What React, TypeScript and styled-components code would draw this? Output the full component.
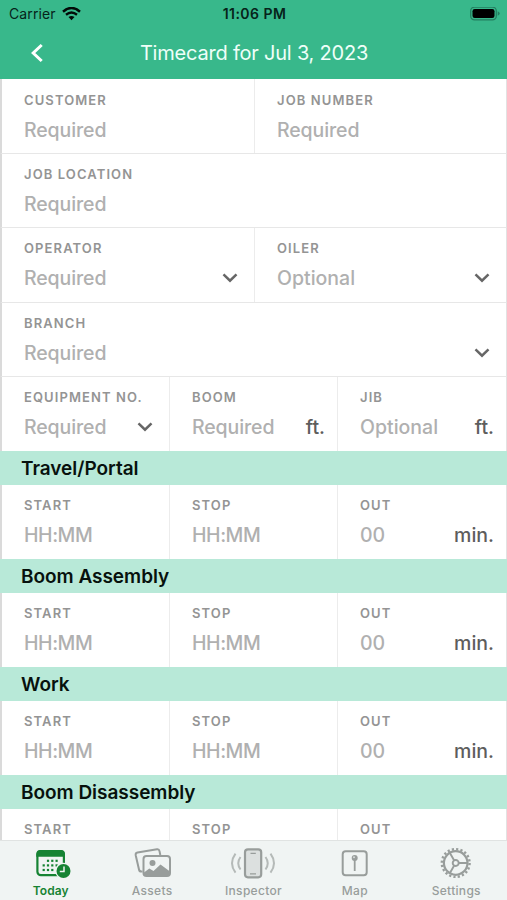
import React from "react";
import styled, { createGlobalStyle } from "styled-components";

const GlobalStyle = createGlobalStyle`
  * { box-sizing: border-box; }
  html, body { margin: 0; padding: 0; background: #fff; }
  body { font-family: Inter, "Liberation Sans", sans-serif; overflow: hidden; }
`;

const Screen = styled.div`
  width: 507px;
  height: 900px;
  display: flex;
  flex-direction: column;
  overflow: hidden;
  background: #fff;
`;

const Header = styled.header`
  flex: none;
  height: 79px;
  background: #38b88b;
`;

const StatusBar = styled.div`
  height: 27px;
  display: grid;
  grid-template-columns: 1fr auto 1fr;
  align-items: center;
  padding: 0 7px 0 9px;
  color: #06231a;
  font-size: 14px;
  line-height: 27px;
`;

const Carrier = styled.div`
  display: flex;
  align-items: center;
  gap: 6px;
  letter-spacing: 0.1px;
`;

const Clock = styled.div`
  font-weight: 600;
  letter-spacing: 0.45px;
`;

const Battery = styled.svg`
  justify-self: end;
`;

const NavBar = styled.div`
  height: 52px;
  display: grid;
  grid-template-columns: 74px 1fr 74px;
  align-items: center;
`;

const BackButton = styled.button`
  border: 0;
  padding: 0;
  background: none;
  height: 52px;
  display: grid;
  place-items: center;
`;

const Title = styled.h1`
  margin: 0;
  padding-left: 1px;
  color: #effff9;
  font-size: 20px;
  font-weight: 400;
  letter-spacing: -0.21px;
  text-align: center;
  white-space: nowrap;
`;

const Form = styled.main`
  flex: 1;
  min-height: 0;
  overflow: hidden;
`;

const Row = styled.div<{ $columns: string; $height: number; $last?: boolean; $inset?: number }>`
  display: grid;
  grid-template-columns: ${(p) => p.$columns};
  height: ${(p) => p.$height}px;
  padding-top: 0;
  border-left: 2px solid #dadada;
  border-right: 1px solid #e2e2e2;
  border-bottom: ${(p) => (p.$last ? 0 : 1)}px solid #e7e7e7;
  & > div {
    padding-top: ${(p) => p.$inset ?? 13}px;
  }
`;

const Cell = styled.div`
  min-width: 0;
  padding: 0 12px 0 22px;
  & + & {
    border-left: 1px solid #ececec;
  }
`;

const Label = styled.div`
  color: #949494;
  font-size: 13px;
  font-weight: 600;
  letter-spacing: 1.1px;
  line-height: 14px;
  white-space: nowrap;
`;

const Field = styled.div`
  display: flex;
  justify-content: space-between;
  align-items: center;
  height: 24px;
  margin-top: 11px;
`;

const Value = styled.span<{ $tracking: number }>`
  color: #b0b0b0;
  font-size: 19.5px;
  font-weight: 500;
  letter-spacing: ${(p) => p.$tracking}px;
`;

const Unit = styled.span`
  color: #5d5d5d;
  font-size: 19.5px;
  font-weight: 500;
`;

const Chevron = styled.svg`
  margin-right: 4px;
`;

const SectionTitle = styled.h2`
  height: 34px;
  margin: 0;
  padding: 1px 0 0 21px;
  background: #b8e9d8;
  color: #07110d;
  font-size: 19px;
  font-weight: 600;
  line-height: 34px;
  letter-spacing: -0.03px;
`;

const TabBar = styled.nav`
  flex: none;
  height: 60px;
  display: grid;
  grid-template-columns: repeat(5, 1fr);
  border-top: 1px solid #e0e3e2;
  background: #f0f4f3;
`;

const Tab = styled.a<{ $active?: boolean }>`
  display: flex;
  flex-direction: column;
  align-items: center;
  color: ${(p) => (p.$active ? "#168333" : "#989d9b")};
  font-size: 12px;
  font-weight: ${(p) => (p.$active ? 600 : 500)};
  line-height: 14px;
  letter-spacing: ${(p) => (p.$active ? 0.1 : 0.3)}px;
`;

const TabIcon = styled.svg`
  width: 50px;
  height: 43px;
`;

type FieldSpec = {
  label: string;
  value: string;
  unit?: string;
  menu?: boolean;
};

const tracking: Record<string, number> = {
  Required: -0.1,
  Optional: 0,
  "HH:MM": -0.45,
  "00": 0,
};

function FieldCell({ label, value, unit, menu }: FieldSpec) {
  return (
    <Cell>
      <Label>{label}</Label>
      <Field>
        <Value $tracking={tracking[value]}>{value}</Value>
        {unit && <Unit>{unit}</Unit>}
        {menu && (
          <Chevron width="16" height="10" viewBox="0 0 16 10" fill="none">
            <path d="M1.5 1.3 8 7.700l6.500-6.400" stroke="#666" strokeWidth="2.500" />
          </Chevron>
        )}
      </Field>
    </Cell>
  );
}

const full = "1fr";
const halves = "252px 1fr";
const thirds = "167px 168px 1fr";

const jobRows: { columns: string; height: number; inset?: number; last?: boolean; fields: FieldSpec[] }[] = [
  {
    columns: halves,
    height: 75,
    inset: 14,
    fields: [
      { label: "CUSTOMER", value: "Required" },
      { label: "JOB NUMBER", value: "Required" },
    ],
  },
  { columns: full, height: 74, fields: [{ label: "JOB LOCATION", value: "Required" }] },
  {
    columns: halves,
    height: 75,
    fields: [
      { label: "OPERATOR", value: "Required", menu: true },
      { label: "OILER", value: "Optional", menu: true },
    ],
  },
  { columns: full, height: 74, fields: [{ label: "BRANCH", value: "Required", menu: true }] },
  {
    columns: thirds,
    height: 74,
    last: true,
    fields: [
      { label: "EQUIPMENT NO.", value: "Required", menu: true },
      { label: "BOOM", value: "Required", unit: "ft." },
      { label: "JIB", value: "Optional", unit: "ft." },
    ],
  },
];

const timeSections = ["Travel/Portal", "Boom Assembly", "Work", "Boom Disassembly"];

const timeFields: FieldSpec[] = [
  { label: "START", value: "HH:MM" },
  { label: "STOP", value: "HH:MM" },
  { label: "OUT", value: "00", unit: "min." },
];

const dots = [
  [22, 19.8], [26.3, 19.8], [30.6, 19.8],
  [17.7, 24.4], [22, 24.4], [26.3, 24.4], [30.6, 24.4],
  [17.7, 29], [22, 29], [26.3, 29],
];

function TodayIcon() {
  return (
    <TabIcon viewBox="0 0 50 43">
      <rect x="11.4" y="10.200" width="26.500" height="24" rx="3.500" fill="none" stroke="currentColor" strokeWidth="2.200" />
      <path d="M10.300 15.800v-2.800a4 4 0 0 1 4-4h20.700a4 4 0 0 1 4 4v2.800z" fill="currentColor" />
      {dots.map(([x, y]) => (
        <rect key={`${x}-${y}`} x={x - 1.1} y={y - 1.1} width="2.2" height="2.2" fill="currentColor" />
      ))}
      <circle cx="37.500" cy="30" r="8.300" fill="#f0f4f3" />
      <circle cx="37.500" cy="30" r="7" fill="currentColor" />
      <path d="M38 25.500v5h-4.200" fill="none" stroke="#f0f4f3" strokeWidth="1.500" />
    </TabIcon>
  );
}

function AssetsIcon() {
  return (
    <TabIcon viewBox="0 0 50 43">
      <path
        d="M15.500 30.500h-1.200q-2 0-2.300-2L8.700 14.300q-.4-2.200 1.800-2.700l19.500-3.300q2.100-.3 2.500 1.800l.8 3.900"
        fill="none"
        stroke="currentColor"
        strokeWidth="2"
      />
      <rect x="16.500" y="15" width="26.500" height="20" rx="3" fill="#f0f4f3" stroke="currentColor" strokeWidth="2" />
      <circle cx="25.500" cy="22" r="3" fill="currentColor" />
      <path d="M17 31.500l5.300-4 4.200 2.500 7-6.500 9.500 7v3.500q0 1-1 1H18q-1 0-1-1z" fill="currentColor" />
    </TabIcon>
  );
}

function InspectorIcon() {
  return (
    <TabIcon viewBox="0 0 50 43">
      <rect x="17" y="8.300" width="16.200" height="28" rx="3" fill="#dce0df" stroke="currentColor" strokeWidth="2.200" />
      <path d="M22.500 12.300h5.300M22 32.800h6" stroke="currentColor" strokeWidth="1.300" />
      <g fill="none" stroke="#b5bab8" strokeWidth="2">
        <path d="M12.500 16q-4.500 6.200 0 12.500M7.500 12.700q-7 9.500 0 19M37.500 16q4.500 6.200 0 12.500M42.500 12.700q7 9.500 0 19" />
      </g>
    </TabIcon>
  );
}

function MapIcon() {
  return (
    <TabIcon viewBox="0 0 50 43">
      <rect x="12.700" y="10.200" width="24" height="24" rx="3" fill="none" stroke="currentColor" strokeWidth="2" />
      <path d="M24.700 18.500v11.500" stroke="currentColor" strokeWidth="1.800" />
      <circle cx="24.700" cy="17" r="3" fill="currentColor" />
      <circle cx="24" cy="16.300" r="1" fill="#d5dad8" />
    </TabIcon>
  );
}

function SettingsIcon() {
  return (
    <TabIcon viewBox="0 0 50 43">
      <g transform="translate(24.700 22)" fill="none" stroke="currentColor">
        <circle r="11.800" strokeWidth="2.200" />
        <circle r="13.900" strokeWidth="2.400" strokeDasharray="2.200 2.167" />
        <circle r="3" strokeWidth="1.900" />
        <path d="M3 0h8.600M-1.500-2.600l-4.300-7.400M-1.500 2.600l-4.300 7.400" strokeWidth="1.900" />
      </g>
    </TabIcon>
  );
}

const tabs = [
  { name: "Today", Icon: TodayIcon, active: true },
  { name: "Assets", Icon: AssetsIcon },
  { name: "Inspector", Icon: InspectorIcon },
  { name: "Map", Icon: MapIcon },
  { name: "Settings", Icon: SettingsIcon },
];

export default function App() {
  return (
    <Screen>
      <GlobalStyle />
      <Header>
        <StatusBar>
          <Carrier>
            Carrier
            <svg width="19" height="14" viewBox="0 0 19 14" fill="none" stroke="#020a07">
              <path d="M1 4.700q8.500-7.400 17 0" strokeWidth="2.500" />
              <path d="M4 7.800q5.500-4.400 11 0" strokeWidth="2.400" />
              <path d="M6.500 10.100q3-2.300 6 0L9.500 13.200z" fill="#020a07" stroke="none" />
            </svg>
          </Carrier>
          <Clock>11:06 PM</Clock>
          <Battery width="30" height="14" viewBox="0 0 30 14">
            <rect x=".7" y=".2" width="25.600" height="12.600" rx="3.800" fill="none" stroke="#237f60" strokeWidth="1.300" />
            <rect x="2.500" y="2" width="22" height="9" rx="2.200" fill="#000" />
            <path d="M27.700 4.200q2 .8 2 2.300t-2 2.300z" fill="#237f60" />
          </Battery>
        </StatusBar>
        <NavBar>
          <BackButton aria-label="Back">
            <svg width="14" height="20" viewBox="0 0 14 20" fill="none">
              <path d="M11.700 2 3.200 10l8.500 8" stroke="#fff" strokeWidth="3" />
            </svg>
          </BackButton>
          <Title>Timecard for Jul 3, 2023</Title>
        </NavBar>
      </Header>
      <Form>
        {jobRows.map((row) => (
          <Row
            key={row.fields[0].label}
            $columns={row.columns}
            $height={row.height}
            $inset={row.inset}
            $last={row.last}
          >
            {row.fields.map((field) => (
              <FieldCell key={field.label} {...field} />
            ))}
          </Row>
        ))}
        {timeSections.map((name) => (
          <section key={name}>
            <SectionTitle>{name}</SectionTitle>
            <Row $columns={thirds} $height={74} $last>
              {timeFields.map((field) => (
                <FieldCell key={field.label} {...field} />
              ))}
            </Row>
          </section>
        ))}
      </Form>
      <TabBar>
        {tabs.map(({ name, Icon, active }) => (
          <Tab key={name} $active={active}>
            <Icon />
            {name}
          </Tab>
        ))}
      </TabBar>
    </Screen>
  );
}
